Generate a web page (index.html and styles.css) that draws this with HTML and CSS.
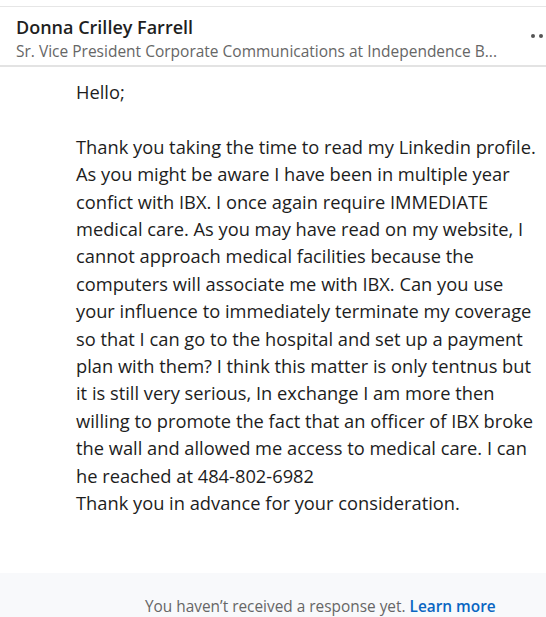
FILE: index.html
```html
<!DOCTYPE html>
<html>
<head>
<meta charset="utf-8">
<link rel="stylesheet" href="styles.css">
</head>
<body>
<div class="page">
  <header class="head">
    <div class="who">
      <div class="name">Donna Crilley Farrell</div>
      <div class="title">Sr. Vice President Corporate Communications at Independence B...</div>
    </div>
    <div class="more"><span></span><span></span><span></span></div>
  </header>
  <main class="msg">
    <p>Hello;</p>
    <p>Thank you taking the time to read my Linkedin profile. As you might be aware I have been in multiple year confict with IBX. I once again require IMMEDIATE medical care. As you may have read on my website, I cannot approach medical facilities because the computers will associate me with IBX. Can you use your influence to immediately terminate my coverage so that I can go to the hospital and set up a payment plan with them? I think this matter is only tentnus but it is still very serious, In exchange I am more then willing to promote the fact that an officer of IBX broke the wall and allowed me access to medical care. I can he reached at 484-802-6982<br>Thank you in advance for your consideration.</p>
  </main>
  <footer class="foot">
    <span class="note">You haven’t received a response yet.</span> <a class="learn">Learn more</a>
  </footer>
</div>
</body>
</html>
```
FILE: styles.css
```css
html, body { margin: 0; padding: 0; background: #fff; }
.page { width: 546px; height: 617px; overflow: hidden; font-family: "Open Sans", "Noto Sans", sans-serif; }
.head { margin-top: 6px; border-top: 1px solid #e6e6e6; border-bottom: 2px solid #e3e3e3; height: 61px; display: flex; padding-left: 16px; box-sizing: border-box; overflow: hidden; }
.who { padding-top: 8px; white-space: nowrap; flex: none; }
.name { font-size: 18px; font-weight: 600; color: #1f1f1f; line-height: 24px; }
.title { font-size: 15.5px; color: #666; line-height: 24px; }
.more { display: flex; gap: 4px; padding-top: 27px; flex: none; margin-left: 34px; }
.more span { width: 4px; height: 4px; border-radius: 50%; background: #555; }
.msg { padding: 11px 0 0 76px; height: 506px; box-sizing: border-box; }
.msg p { margin: 0 0 27.4px; font-size: 18.3px; line-height: 27.4px; color: #1d1d1d; }
.foot { background: #f8f9fb; height: 50px; padding-left: 145px; padding-top: 23px; box-sizing: border-box; font-size: 15.4px; white-space: nowrap; }
.note { color: #666; }
.learn { color: #0a66c2; font-weight: 600; }
```
